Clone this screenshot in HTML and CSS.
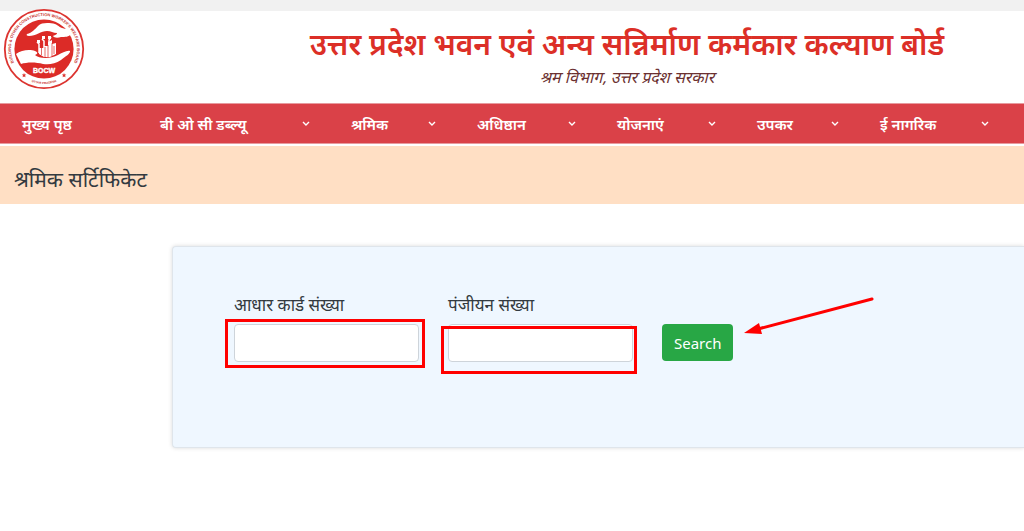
FILE: index.html
```html
<!DOCTYPE html>
<html lang="hi">
<head>
    <meta charset="UTF-8" />
    <meta name="viewport" content="width=device-width, initial-scale=1.0"/>
    <title>श्रमिक सर्टिफिकेट - BOCW</title>
    <link rel="stylesheet" href="styles.css">
</head>
<body>
    <div class="top-strip"></div>
    <header class="header">
        <a href="#" class="logo" aria-label="BOCW">
            <svg viewBox="0 0 82 82" width="82" height="82">
                <defs>
                    <path id="ring-top" d="M14.5 60.6 A33 33 0 1 1 67.5 60.6" />
                    <path id="ring-bottom" d="M23 71 A35 35 0 0 0 59 71" />
                </defs>
                <circle cx="41" cy="41" r="39.2" fill="#fff" stroke="#dc3430" stroke-width="1.8" />
                <circle cx="41" cy="41" r="29.6" fill="#dc2b27" />
                <text class="ring-text"><textPath href="#ring-top" startOffset="50%" text-anchor="middle">BUILDING &amp; OTHER CONSTRUCTION WORKER'S WELFARE BOARD</textPath></text>
                <text class="ring-small"><textPath href="#ring-bottom" startOffset="50%" text-anchor="middle">UTTAR PRADESH</textPath></text>
                <path fill="#dc3430" d="M21 65l.7 1.5 1.6.1-1.2 1 .4 1.6-1.5-.8-1.4.8.4-1.6-1.2-1 1.6-.1zM61 65l.7 1.5 1.6.1-1.2 1 .4 1.6-1.5-.8-1.4.8.4-1.6-1.2-1 1.6-.1z" />
                <!-- upper hand -->
                <path fill="#fff" d="M24 26 C29 25 32 21 35 18 C39 14 47 15 52 16 C55 17 58 21 64 21 L68 26 C66 29 62 29 58 29 C55 30 51 30 50 28 C51 27 54 27 54 25 C50 25 48 23 44 23 C38 23 33 28 26 28 C24 28 23 27 24 26Z" />
                <!-- lower hand -->
                <path fill="#fff" d="M13 46 C18 42 27 41 32 43 C35 44 35 46 32 47 C36 51 48 51 55 47 C59 45 64 42 67 43 C68 45 62 49 58 52 C52 56 46 57 40 56 C33 54 24 54 18 56Z" />
                <!-- workers and buildings -->
                <path fill="#fff" d="M36 46V40h5v-2h4v-4l4-2v4l4-1v11l-6 3h-6z" />
                <path fill="none" stroke="#fff" stroke-width="1.5" d="M36 45v-9l-2-2M41 40v-7l-2-2M46 36v-4l2-3" />
                <path fill="#fff" d="M34 32h3v3h-3zM39 28h3v3h-3zM45 28h3v3h-3z" />
                <path fill="none" stroke="#dc2b27" stroke-width=".7" d="M38.500 40v7M42 39v10M45 37v12M49 35v13M51 38v8" />
                <text class="logo-name" x="41" y="65" text-anchor="middle">BOCW</text>
            </svg>
        </a>
        <div class="heading">
            <h1>उत्तर प्रदेश भवन एवं अन्य सन्निर्माण कर्मकार कल्याण बोर्ड</h1>
            <p>श्रम विभाग, उत्तर प्रदेश सरकार</p>
        </div>
    </header>

    <nav class="navbar">
        <a href="#">मुख्य पृष्ठ</a>
        <a href="#">बी ओ सी डब्ल्यू <svg class="chevron" viewBox="0 0 8 6"><path d="M1 1l3 3 3-3" /></svg></a>
        <a href="#">श्रमिक <svg class="chevron" viewBox="0 0 8 6"><path d="M1 1l3 3 3-3" /></svg></a>
        <a href="#">अधिष्ठान <svg class="chevron" viewBox="0 0 8 6"><path d="M1 1l3 3 3-3" /></svg></a>
        <a href="#">योजनाएं <svg class="chevron" viewBox="0 0 8 6"><path d="M1 1l3 3 3-3" /></svg></a>
        <a href="#">उपकर <svg class="chevron" viewBox="0 0 8 6"><path d="M1 1l3 3 3-3" /></svg></a>
        <a href="#">ई नागरिक <svg class="chevron" viewBox="0 0 8 6"><path d="M1 1l3 3 3-3" /></svg></a>
    </nav>

    <h2 class="page-title">श्रमिक सर्टिफिकेट</h2>

    <main class="content">
        <form class="search-card">
            <div class="field">
                <label for="aadhaar">आधार कार्ड संख्या</label>
                <input type="text" id="aadhaar">
                <span class="mark mark-aadhaar"></span>
            </div>
            <div class="field">
                <label for="registration">पंजीयन संख्या</label>
                <input type="text" id="registration">
                <span class="mark mark-registration"></span>
            </div>
            <div class="action">
                <button type="button" class="search-btn">Search</button>
                <svg class="arrow" viewBox="0 0 130 38" width="130" height="38">
                    <path d="M14 32L128 2" stroke="#f00" stroke-width="3" stroke-linecap="round" />
                    <path d="M0 36l15-10 3 11z" fill="#f00" />
                </svg>
            </div>
        </form>
    </main>
</body>
</html>
```
FILE: styles.css
```css
:root {
    --primary-color: #da4148;
    --heading-color: #dc2f27;
    --success-color: #28a745;
    --mark-color: #ff0000;
}
* {
    box-sizing: border-box;
}
body {
    margin: 0;
    min-height: 100vh;
    background-color: #fff;
    color: #333a40;
    font-family: "Open Sans", "Noto Sans", "Noto Sans Devanagari", sans-serif;
    overflow-x: hidden;
}
.top-strip {
    height: 11px;
    background-color: #f1f1f1;
}
.header {
    display: flex;
    height: 92px;
    padding-left: 3px;
}
.logo {
    flex: none;
    width: 82px;
    height: 82px;
    margin-top: -3px;
}
.logo svg {
    display: block;
}
.ring-text {
    font: bold 4px "Liberation Sans", sans-serif;
    fill: #c83430;
}
.ring-small {
    font: bold 3px "Liberation Sans", sans-serif;
    fill: #c83430;
}
.logo-name {
    font: bold 7px "Liberation Sans", sans-serif;
    fill: #fff;
    stroke: #fff;
    stroke-width: 0.4;
}
.heading {
    flex: 1;
    padding: 11px 0 0 145px;
    text-align: center;
}
.heading h1 {
    margin: 0;
    color: var(--heading-color);
    font-size: 30px;
    font-weight: 600;
    line-height: 44px;
    white-space: nowrap;
}
.heading p {
    margin: 0;
    color: #6b3030;
    font-family: "Noto Sans Devanagari", sans-serif;
    font-size: 16px;
    font-style: oblique;
    line-height: 28px;
}
.navbar {
    display: grid;
    grid-template-columns: 138fr 191fr 126fr 140fr 140fr 123fr 144fr;
    height: 41px;
    padding-left: 22px;
    background-color: var(--primary-color);
    border-top: 1px solid #e79a9e;
    border-bottom: 1px solid #e79a9e;
}
.navbar a {
    display: flex;
    align-items: center;
    justify-content: space-between;
    padding-right: 41px;
    color: #fff;
    font-size: 15px;
    font-weight: 600;
    text-decoration: none;
    white-space: nowrap;
}
.navbar a:last-child {
    padding-right: 35px;
}
.chevron {
    width: 8px;
    height: 6px;
    fill: none;
    stroke: #fff;
    stroke-width: 1.4;
}
.page-title {
    margin: 2px 0 0;
    padding: 16px 14px 8px;
    background-color: #ffdfc4;
    font-size: 21px;
    font-weight: 400;
    line-height: 34px;
}
.content {
    padding: 42px 0 40px 172px;
}
.search-card {
    display: flex;
    gap: 29px;
    min-height: 202px;
    padding: 45px 20px 40px 61px;
    background-color: #eff7ff;
    border: 1px solid #dfe5eb;
    border-right: 0;
    border-radius: 4px 0 0 4px;
    box-shadow: 0 0 4px rgba(0,0,0,0.15);
}
.field {
    position: relative;
    width: 185px;
}
.field label {
    display: block;
    height: 32px;
    font-size: 17px;
    line-height: 26px;
    white-space: nowrap;
}
.field input {
    display: block;
    width: 100%;
    height: 38px;
    padding: 6px 12px;
    background-color: #fff;
    border: 1px solid #ced4da;
    border-radius: 4px;
    font: inherit;
}
/* red highlight drawn over the inputs */
.mark {
    position: absolute;
    border: 3px solid var(--mark-color);
    pointer-events: none;
}
.mark-aadhaar {
    inset: 27px -6px auto -9px;
    height: 49px;
}
.mark-registration {
    inset: 34px -4px auto -7px;
    height: 48px;
}
.action {
    position: relative;
    padding-top: 32px;
}
.search-btn {
    height: 37px;
    padding: 0 12px;
    background-color: var(--success-color);
    color: #fff;
    border: 0;
    border-radius: 4px;
    font-family: "Noto Sans", sans-serif;
    font-size: 15px;
    cursor: pointer;
}
.arrow {
    position: absolute;
    top: 5px;
    left: 82px;
}
```
